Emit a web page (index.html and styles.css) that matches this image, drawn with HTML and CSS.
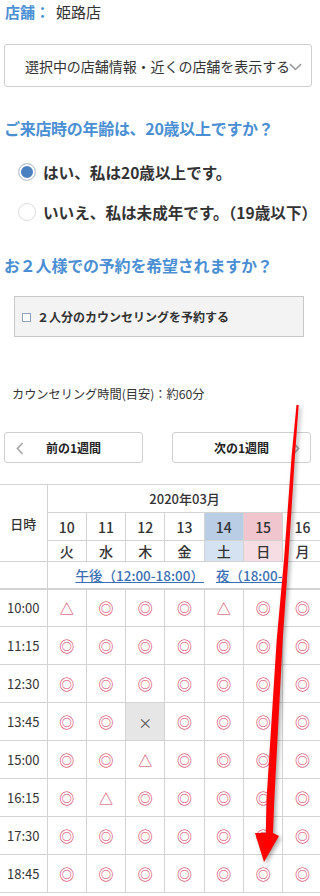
FILE: index.html
```html
<!DOCTYPE html>
<html lang="ja">
<head>
<meta charset="utf-8">
<title>予約</title>
<link rel="stylesheet" href="styles.css">
</head>
<body>
<div class="page">
  <div class="store"><span class="store-label">店舗：</span><span class="store-name">姫路店</span></div>

  <div class="select">
    <span class="select-text">選択中の店舗情報・近くの店舗を表示する</span>
    <svg class="select-chev" width="13" height="8" viewBox="0 0 13 8"><path d="M1 1.2 L6.5 6.5 L12 1.2" fill="none" stroke="#9a9a9a" stroke-width="1.6"/></svg>
  </div>

  <h2 class="q q1">ご来店時の年齢は、20歳以上ですか？</h2>

  <div class="radio-row r1"><span class="radio on"></span><span class="radio-label">はい、私は20歳以上です。</span></div>
  <div class="radio-row r2"><span class="radio"></span><span class="radio-label">いいえ、私は未成年です。（19歳以下）</span></div>

  <h2 class="q q2">お２人様での予約を希望されますか？</h2>

  <div class="check-box"><span class="check"></span><span class="check-label">２人分のカウンセリングを予約する</span></div>

  <p class="duration">カウンセリング時間(目安)：約60分</p>

  <div class="week-nav">
    <div class="week-btn"><svg class="chev chev-l" width="8" height="13" viewBox="0 0 8 13"><path d="M6.5 1 L1.5 6.5 L6.5 12" fill="none" stroke="#aaa" stroke-width="1.8"/></svg><span>前の1週間</span></div>
    <div class="week-btn"><span>次の1週間</span><svg class="chev chev-r" width="8" height="13" viewBox="0 0 8 13"><path d="M1.5 1 L6.5 6.5 L1.5 12" fill="none" stroke="#aaa" stroke-width="1.8"/></svg></div>
  </div>

  <div class="table-wrap">
    <table class="cal">
      <colgroup><col class="c-time"><col class="c-day"><col class="c-day"><col class="c-day"><col class="c-day"><col class="c-day"><col class="c-day"><col class="c-day"></colgroup>
      <thead>
        <tr class="h-month"><th rowspan="3" class="h-label">日時</th><th colspan="7">2020年03月</th></tr>
        <tr class="h-date"><th>10</th><th>11</th><th>12</th><th>13</th><th class="sat">14</th><th class="sun">15</th><th>16</th></tr>
        <tr class="h-wd"><th>火</th><th>水</th><th>木</th><th>金</th><th class="sat">土</th><th class="sun">日</th><th>月</th></tr>
        <tr class="h-range"><th></th><th colspan="7"><div class="range"><a href="#">午後（12:00-18:00）</a><a href="#">夜（18:00-21:00）</a></div></th></tr>
      </thead>
      <tbody>
        <tr><th>10:00</th><td class="tri">△</td><td class="ok">◎</td><td class="ok">◎</td><td class="ok">◎</td><td class="tri">△</td><td class="ok">◎</td><td class="ok">◎</td></tr>
        <tr><th>11:15</th><td class="ok">◎</td><td class="ok">◎</td><td class="ok">◎</td><td class="ok">◎</td><td class="ok">◎</td><td class="ok">◎</td><td class="ok">◎</td></tr>
        <tr><th>12:30</th><td class="ok">◎</td><td class="ok">◎</td><td class="ok">◎</td><td class="ok">◎</td><td class="ok">◎</td><td class="ok">◎</td><td class="ok">◎</td></tr>
        <tr><th>13:45</th><td class="ok">◎</td><td class="ok">◎</td><td class="ng">×</td><td class="ok">◎</td><td class="ok">◎</td><td class="ok">◎</td><td class="ok">◎</td></tr>
        <tr><th>15:00</th><td class="ok">◎</td><td class="ok">◎</td><td class="tri">△</td><td class="ok">◎</td><td class="ok">◎</td><td class="ok">◎</td><td class="ok">◎</td></tr>
        <tr><th>16:15</th><td class="ok">◎</td><td class="tri">△</td><td class="ok">◎</td><td class="ok">◎</td><td class="ok">◎</td><td class="ok">◎</td><td class="ok">◎</td></tr>
        <tr><th>17:30</th><td class="ok">◎</td><td class="ok">◎</td><td class="ok">◎</td><td class="ok">◎</td><td class="ok">◎</td><td class="ok">◎</td><td class="ok">◎</td></tr>
        <tr><th>18:45</th><td class="ok">◎</td><td class="ok">◎</td><td class="ok">◎</td><td class="ok">◎</td><td class="ok">◎</td><td class="ok">◎</td><td class="ok">◎</td></tr>
      </tbody>
    </table>
  </div>

  <svg class="arrow" width="320" height="896" viewBox="0 0 320 896">
    <polygon fill="#ff0000" points="296.5,405 291.7,455 284,560 276.7,640 266.5,800 265.8,833 255,833 264,862 279,836 273,833 274.3,800 282.7,640 288.3,560 295,455 298.7,405"/>
  </svg>
</div>
</body>
</html>
```

FILE: styles.css
```css
* { box-sizing: border-box; }
html, body { margin: 0; padding: 0; }
body {
  background: #fff;
  color: #333;
  font-family: "Noto Sans CJK JP", "Noto Sans", sans-serif;
  width: 320px;
  height: 896px;
  overflow: hidden;
}
.page { position: relative; width: 320px; height: 896px; overflow: hidden; }

.store { height: 24px; line-height: 24px; padding-left: 5px; font-size: 15px; }
.store-label { color: #4a8fd3; font-weight: 700; }
.store-name { margin-left: 6px; color: #333; }

.select {
  margin: 20px 0 0 4px;
  width: 308px;
  height: 43px;
  border: 1px solid #cfcfcf;
  border-radius: 3px;
  display: flex;
  align-items: center;
  padding-left: 20px;
  font-size: 14px;
  color: #333;
}
.select-text { white-space: nowrap; letter-spacing: -0.05px; }
.select-chev { margin-left: -1px; margin-top: 2px; flex: none; }

.q {
  margin: 0;
  padding-left: 4px;
  height: 24px;
  line-height: 24px;
  font-size: 16px;
  font-weight: 700;
  color: #4a8fd3;
  white-space: nowrap;
}
.q1 { margin-top: 29px; letter-spacing: -0.3px; }
.q2 { margin-top: 29px; letter-spacing: -0.2px; }

.radio-row {
  display: flex;
  align-items: center;
  height: 24px;
  padding-left: 18px;
  font-size: 15.6px;
  font-weight: 700;
  color: #333;
  white-space: nowrap;
}
.r1 { margin-top: 20px; }
.r2 { margin-top: 16px; }
.radio {
  width: 18px; height: 18px;
  border-radius: 50%;
  border: 1px solid #dcdcdc;
  background: #fff;
  margin-right: 7px;
  flex: none;
}
.radio.on { background: #4a7fc0; box-shadow: inset 0 0 0 2px #fff; border-color: #cfcfcf; }

.check-box {
  margin: 19px 0 0 14px;
  width: 290px;
  height: 41px;
  background: #f3f3f3;
  border: 1px solid #c8c8c8;
  display: flex;
  align-items: center;
  padding-left: 7px;
  font-size: 12px;
  font-weight: 700;
  color: #333;
}
.check { width: 9px; height: 9px; border: 1px solid #8ea2bd; background: #fff; margin-right: 6px; margin-top: 1px; flex: none; }

.duration {
  margin: 47px 0 0 12px;
  height: 20px;
  line-height: 20px;
  font-size: 12.2px;
  color: #333;
  white-space: nowrap;
}

.week-nav { display: flex; justify-content: space-between; margin: 28px 0 0 4px; width: 307px; }
.week-btn {
  position: relative;
  width: 139px;
  height: 31px;
  border: 1px solid #cfcfcf;
  border-radius: 3px;
  display: flex;
  align-items: center;
  justify-content: center;
  font-size: 12px;
  font-weight: 700;
  color: #222;
}
.chev { position: absolute; top: 9px; }
.chev-l { left: 11px; }
.chev-r { right: 10px; }

.table-wrap { margin-top: 21px; width: 320px; overflow: hidden; }
.cal {
  border-collapse: collapse;
  table-layout: fixed;
  width: 322px;
  font-size: 13px;
  color: #333;
}
.c-time { width: 47px; }
.c-day { width: 39.3px; }
.cal th, .cal td { border: 1px solid #d3d3d3; padding: 0; text-align: center; vertical-align: middle; }
.cal tr > :first-child { border-left: none; }
.cal thead th { font-weight: 500; }
.h-month th { height: 28px; }
.h-label { font-weight: 500; }
.h-date th { height: 28px; font-size: 14px; }
.h-wd th { height: 20px; font-size: 14px; }
.h-range th { height: 27px; border-bottom: 2px solid #d3d3d3; }
.h-date .sat { background: #b9cde5; }
.h-wd .sat { background: #d5e2f1; }
.h-date .sun { background: #f0c5ce; }
.h-wd .sun { background: #f6dde4; }
.range { width: 239px; overflow: hidden; white-space: nowrap; text-align: left; padding-left: 28px; font-weight: 500; font-size: 13.5px; }
.range a { color: #3a6fb3; text-decoration: underline; margin-right: 12px; }

.cal tbody th { height: 38px; font-weight: 400; font-size: 13px; }
.cal tbody td { font-size: 15px; color: #d6365e; }
.cal td.tri { font-size: 14px; color: #d33a60; }
.cal td.ng { background: #e6e6e6; color: #555; font-size: 14px; }

.arrow { position: absolute; left: 0; top: 0; pointer-events: none; filter: drop-shadow(2px 2px 2px rgba(0,0,0,0.35)); }
```
